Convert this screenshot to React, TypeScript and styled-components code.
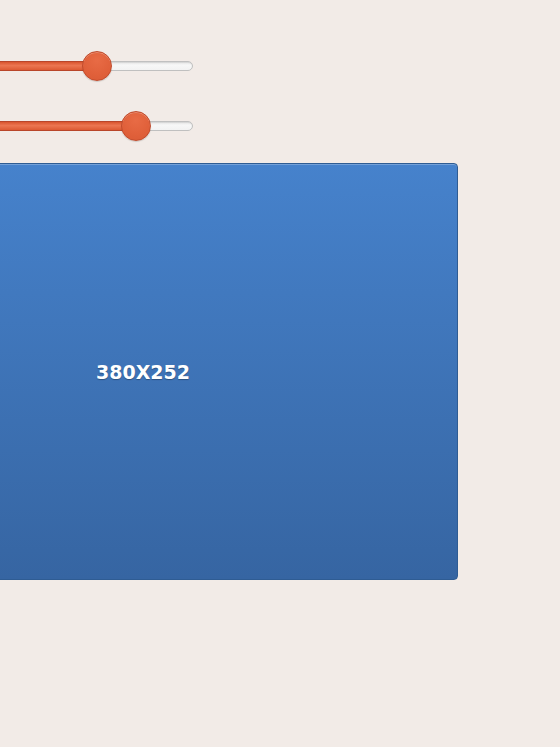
import React from "react";
import styled, { createGlobalStyle } from "styled-components";

const Global = createGlobalStyle`
  html, body { margin: 0; padding: 0; background: #f2ebe7; overflow: hidden; }
  body { font-family: "DejaVu Sans", Verdana, sans-serif; }
`;

const Page = styled.div`
  width: 560px;
  height: 747px;
  overflow: hidden;
`;

const Content = styled.div`
  margin-left: -172px;
  padding-top: 51px;
  display: flex;
  flex-direction: column;
  gap: 30px;
`;

const SliderRow = styled.div`
  position: relative;
  width: 365px;
  height: 30px;
  display: flex;
  align-items: center;
`;

const Track = styled.div`
  position: relative;
  width: 100%;
  height: 10px;
  box-sizing: border-box;
  border: 1px solid #c0c0c0;
  border-radius: 5px;
  background: linear-gradient(#e6e6e6, #f7f7f7 40%, #f2f2f2);
  box-shadow: inset 0 1px 1px rgba(0,0,0,0.08);
`;

const Fill = styled.div`
  position: absolute;
  left: -1px;
  top: -1px;
  bottom: -1px;
  box-sizing: border-box;
  border: 1px solid #b9462a;
  border-radius: 5px 0 0 5px;
  background: linear-gradient(#d9552f, #ec7651 45%, #dc5a33);
`;

const Thumb = styled.div`
  position: absolute;
  top: 0;
  width: 30px;
  height: 30px;
  margin-left: -15px;
  box-sizing: border-box;
  border-radius: 50%;
  border: 1px solid #c04a2b;
  background: radial-gradient(circle at 50% 30%, #e86b45, #e0603a 60%, #d95a35);
  box-shadow: inset 0 1px 0 rgba(255,255,255,0.25), 0 1px 1px rgba(0,0,0,0.15);
`;

const Placeholder = styled.div`
  margin-top: -8px;
  width: 630px;
  height: 417px;
  box-sizing: border-box;
  border: 1px solid #2f5c93;
  border-radius: 4px;
  background: linear-gradient(#4682cc, #3665a2);
  box-shadow: inset 0 1px 0 rgba(255,255,255,0.25);
  display: flex;
  align-items: center;
  justify-content: center;
  color: #ffffff;
  font-family: "DejaVu Sans", Verdana, sans-serif;
  font-weight: bold;
  font-size: 19px;
  text-shadow: 0 1px 1px rgba(0,0,0,0.3);
`;

function Slider({ pos }: { pos: number }) {
  return (
    <SliderRow>
      <Track>
        <Fill style={{ width: pos }} />
      </Track>
      <Thumb style={{ left: pos }} />
    </SliderRow>
  );
}

export default function App() {
  return (
    <Page>
      <Global />
      <Content>
        <Slider pos={269} />
        <Slider pos={308} />
        <Placeholder>380X252</Placeholder>
      </Content>
    </Page>
  );
}
